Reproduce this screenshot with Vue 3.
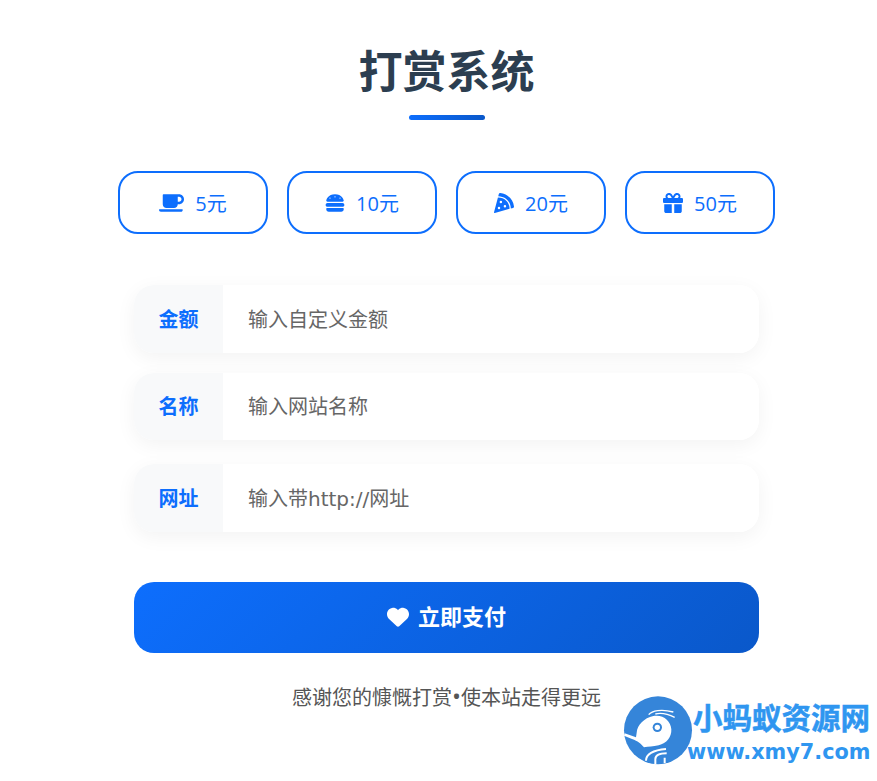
<template>
  <div class="page">
    <div class="card">
      <h1 class="title">打赏系统</h1>
      <div class="title-line"></div>

      <div class="amounts">
        <button v-for="a in amounts" :key="a.label" class="amount" type="button">
          <svg class="amount-icon" :viewBox="a.box" :style="{ width: a.w + 'px' }"><path :d="a.d" /></svg>
          <span>{{ a.label }}</span>
        </button>
      </div>

      <div class="form">
        <div v-for="f in fields" :key="f.label" class="field" :class="f.cls">
          <label class="field-label">{{ f.label }}</label>
          <input class="field-input" type="text" :placeholder="f.placeholder">
        </div>
      </div>

      <button class="pay" type="button">
        <svg class="pay-icon" viewBox="0 0 512 512"><path :d="heart" /></svg>
        <span class="pay-text">立即支付</span>
      </button>

      <p class="thanks">感谢您的慷慨打赏<span class="dot">•</span>使本站走得更远</p>
    </div>

    <!-- watermark -->
    <div class="logo">
      <svg class="logo-mark" viewBox="0 0 240 240">
        <circle cx="120" cy="121" r="102" fill="#3585d9" />
        <path d="M56 128 C58 105 78 84 106 78 C136 73 158 92 160 118 C161 142 146 160 122 166 C104 170 92 170 78 172 C68 160 60 154 42 147 L18 137 L20 130 L54 142 Z" fill="#fff" />
        <path d="M92 74 C102 62 130 56 166 66 M112 72 C128 68 146 70 170 82" fill="none" stroke="#fff" stroke-width="4" />
        <circle cx="118" cy="112" r="14" fill="#3585d9" />
        <circle cx="118" cy="112" r="8" fill="#fff" />
        <path d="M84 212 C84 194 104 180 144 177 M112 222 V208 C112 196 124 190 146 190 M140 220 V203" fill="none" stroke="#fff" stroke-width="6" />
      </svg>
      <div class="logo-text">
        <div class="logo-name">小蚂蚁资源网</div>
        <div class="logo-url">www.xmy7.com</div>
      </div>
    </div>
  </div>
</template>

<script setup>
const heart = 'M47.6 300.4L228.3 469.1c7.5 7 17.4 10.9 27.7 10.9s20.2-3.9 27.7-10.9L464.4 300.4c30.4-28.3 47.6-68 47.6-109.5v-5.8c0-69.9-50.5-129.5-119.4-141C347 36.5 300.6 51.4 268 84L256 96 244 84c-32.6-32.6-79-47.5-124.6-39.9C50.5 55.6 0 115.2 0 185.1v5.8c0 41.5 17.2 81.2 47.6 109.5z'

const amounts = [
  {
    label: '5元',
    box: '0 0 640 512',
    w: 25,
    d: 'M192 384h192c53 0 96-43 96-96h32c70.6 0 128-57.4 128-128S582.6 32 512 32H120c-13.3 0-24 10.7-24 24v232c0 53 43 96 96 96zM512 96c35.3 0 64 28.7 64 64s-28.7 64-64 64h-32V96h32zm47.7 384H48.3c-47.6 0-61-64-36-64h583.3c25 0 11.8 64-35.9 64z'
  },
  {
    label: '10元',
    box: '0 0 512 512',
    w: 20,
    d: 'M61.1 224C45 224 32 211 32 194.9c0-1.9 .2-3.7 .6-5.6C37.9 168.3 78.8 32 256 32s218.1 136.3 223.4 157.3c.5 1.9 .6 3.7 .6 5.6c0 16.1-13 29.1-29.1 29.1H61.1zM144 128a16 16 0 1 0 -32 0 16 16 0 1 0 32 0zm240 16a16 16 0 1 0 0-32 16 16 0 1 0 0 32zM272 96a16 16 0 1 0 -32 0 16 16 0 1 0 32 0zM16 304c0-26.5 21.5-48 48-48H448c26.5 0 48 21.5 48 48s-21.5 48-48 48H64c-26.5 0-48-21.5-48-48zm16 96c0-8.8 7.2-16 16-16H464c8.8 0 16 7.2 16 16v16c0 35.3-28.7 64-64 64H96c-35.3 0-64-28.7-64-64V400z'
  },
  {
    label: '20元',
    box: '0 0 512 512',
    w: 20,
    d: 'M158.87.15c-16.16-1.52-31.2 8.42-35.33 24.12l-14.81 56.27c187.62 5.49 314.54 130.61 322.48 317l56.94-15.78c15.72-4.36 25.49-19.68 23.62-35.9C490.89 165.08 340.78 17.32 158.87.15zm-58.47 112L.55 491.64a16.21 16.21 0 0 0 20 19.75l379-105.1c-4.27-174.89-123.08-292.14-299.15-294.1zM128 416a32 32 0 1 1 32-32 32 32 0 0 1-32 32zm48-152a32 32 0 1 1 32-32 32 32 0 0 1-32 32zm104 104a32 32 0 1 1 32-32 32 32 0 0 1-32 32z'
  },
  {
    label: '50元',
    box: '0 0 512 512',
    w: 20,
    d: 'M190.5 68.8L225.3 128H224 152c-22.1 0-40-17.9-40-40s17.9-40 40-40h2.2c14.9 0 28.8 7.9 36.3 20.8zM64 88c0 14.4 3.5 28 9.6 40H32c-17.7 0-32 14.3-32 32v64c0 17.7 14.3 32 32 32H480c17.7 0 32-14.3 32-32V160c0-17.7-14.3-32-32-32H438.4c6.1-12 9.6-25.6 9.6-40c0-48.6-39.4-88-88-88h-2.2c-31.9 0-61.5 16.9-77.7 44.4L256 85.5l-24.1-41C215.7 16.9 186.1 0 154.2 0H152C103.4 0 64 39.4 64 88zm336 0c0 22.1-17.9 40-40 40H288h-1.3l34.8-59.2C329.1 55.9 342.9 48 357.8 48H360c22.1 0 40 17.9 40 40zM32 288V464c0 26.5 21.5 48 48 48H224V288H32zM288 512H432c26.5 0 48-21.5 48-48V288H288V512z'
  }
]

const fields = [
  { label: '金额', placeholder: '输入自定义金额', cls: '' },
  { label: '名称', placeholder: '输入网站名称', cls: '' },
  { label: '网址', placeholder: '输入带http://网址', cls: 'field-last' }
]
</script>

<style>
body {
  background: #fff;
}
</style>

<style scoped>
.page {
  position: relative;
  width: 877px;
  height: 781px;
  overflow: hidden;
  font-family: "Open Sans", "Noto Sans CJK SC", sans-serif;
}

.card {
  width: 657px;
  margin-left: 118px;
  padding-top: 44px;
  display: flex;
  flex-direction: column;
  align-items: center;
}

.title {
  margin: 0;
  font-size: 44px;
  line-height: 54px;
  font-weight: 700;
  color: #2c3e50;
}

.title-line {
  width: 76px;
  height: 5px;
  margin-top: 17px;
  border-radius: 3px;
  background: linear-gradient(90deg, #0d6efd, #0a58ca);
}

.amounts {
  display: flex;
  gap: 19px;
  margin-top: 51px;
}

.amount {
  display: flex;
  align-items: center;
  justify-content: center;
  gap: 11px;
  width: 150px;
  height: 63px;
  padding: 0;
  border: 2px solid #0d6efd;
  border-radius: 20px;
  background: #fff;
  color: #0d6efd;
  font-family: inherit;
  font-size: 20px;
}

.amount-icon {
  height: 20px;
  fill: #0d6efd;
}

.form {
  width: 625px;
  margin-top: 51px;
  display: flex;
  flex-direction: column;
  gap: 20px;
}

.field {
  display: flex;
  height: 67.5px;
  border-radius: 20px;
  overflow: hidden;
  box-shadow: 0 5px 20px rgba(0, 0, 0, 0.05);
}

.field-last {
  margin-top: 4px;
}

.field-label {
  width: 89px;
  padding-bottom: 1px;
  display: flex;
  align-items: center;
  justify-content: center;
  background: #f8f9fa;
  color: #0d6efd;
  font-size: 20px;
  font-weight: 700;
}

.field-input {
  flex: 1;
  min-width: 0;
  padding: 2px 25px 0;
  border: 0;
  outline: 0;
  background: #fff;
  font-family: "DejaVu Sans", "Noto Sans CJK SC", sans-serif;
  font-size: 20px;
}

.field-input::placeholder {
  color: #666;
  opacity: 1;
}

.pay {
  width: 625px;
  height: 71px;
  margin-top: 50px;
  padding: 0 0 1px;
  display: flex;
  align-items: center;
  justify-content: center;
  gap: 9px;
  border: 0;
  border-radius: 20px;
  background: linear-gradient(135deg, #0d6efd, #0a58ca);
  color: #fff;
  font-family: inherit;
  font-size: 22px;
  font-weight: 700;
}

.pay-text {
  margin-bottom: 3px;
}

.pay-icon {
  width: 22px;
  height: 22px;
  fill: #fff;
}

.thanks {
  margin: 30px 0 0;
  font-size: 20px;
  line-height: 30px;
  color: #555;
}

.dot {
  font-size: 24px;
  line-height: 1;
}

.logo {
  position: absolute;
  left: 618px;
  top: 690px;
  display: flex;
}

.logo-mark {
  width: 80px;
  height: 80px;
  flex: none;
}

.logo-text {
  margin-left: -11px;
  width: 183px;
  text-align: right;
  font-weight: 700;
  color: #2f96f0;
}

.logo-name {
  font-size: 29.5px;
  line-height: 52px;
  -webkit-text-stroke: 0.5px #2f96f0;
  font-family: "Noto Sans CJK SC", sans-serif;
}

.logo-url {
  font-family: "DejaVu Sans", sans-serif;
  font-size: 20.8px;
  line-height: 20px;
  white-space: nowrap;
}
</style>
